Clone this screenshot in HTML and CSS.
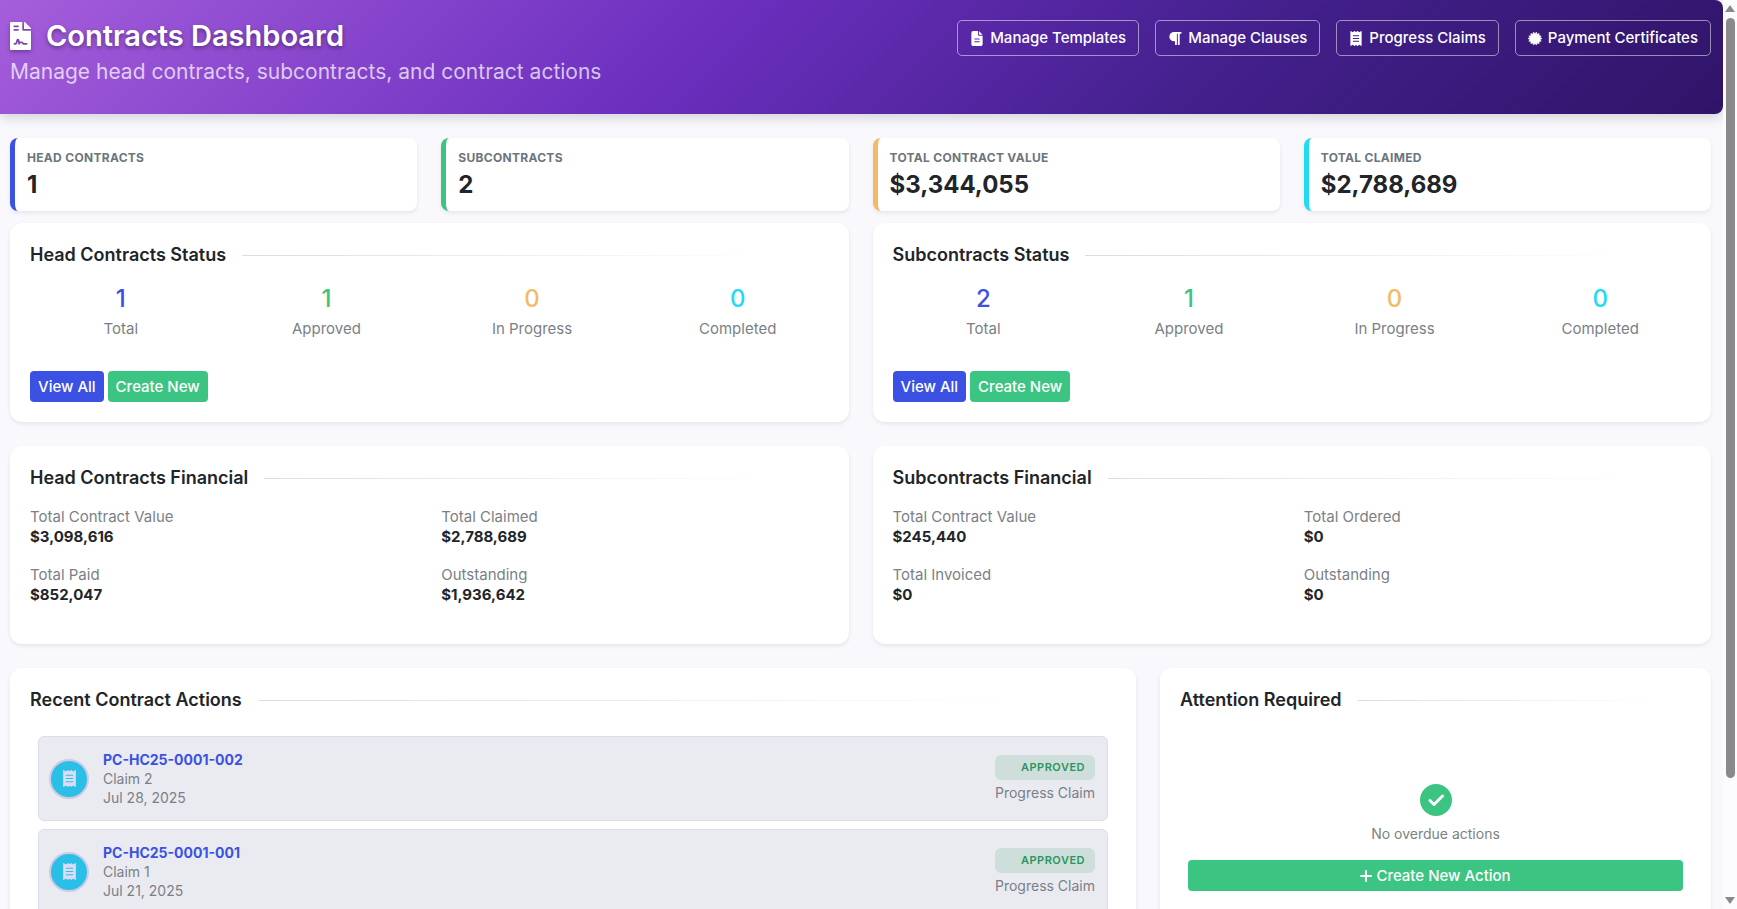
FILE: index.html
```html
<!DOCTYPE html>
<html lang="en">
<head>
    <meta charset="UTF-8">
    <meta name="viewport" content="width=device-width, initial-scale=1.0">
    <title>Contracts Dashboard</title>
    <link rel="stylesheet" href="styles.css">
</head>
<body>
    <!-- icon sprite -->
    <svg class="sprite" aria-hidden="true">
        <symbol id="icon-contract" viewBox="0 0 384 512">
            <path d="M224 136V0H24C10.700 0 0 10.700 0 24v464c0 13.300 10.700 24 24 24h336c13.300 0 24-10.700 24-24V160H248c-13.200 0-24-10.800-24-24zM64 72c0-4.420 3.580-8 8-8h80c4.420 0 8 3.580 8 8v16c0 4.420-3.580 8-8 8H72c-4.420 0-8-3.580-8-8V72zm0 64c0-4.420 3.580-8 8-8h80c4.420 0 8 3.580 8 8v16c0 4.420-3.580 8-8 8H72c-4.420 0-8-3.580-8-8v-16zm192.810 248H304c8.840 0 16 7.160 16 16s-7.160 16-16 16h-47.190c-16.450 0-31.800-9.140-39.140-23.880-4.030-8.080-10.460-9.280-14.670-9.280s-10.650 1.200-14.800 9.800l-7.670 15.360A16 16 0 0 1 167 416c-.38 0-.77 0-1.140-.05-6.400-.45-11.980-4.750-14.020-10.840L144 354.590l-10.610 31.880c-5.890 17.660-22.380 29.530-41 29.530H80c-8.840 0-16-7.160-16-16s7.160-16 16-16h12.390c4.830 0 9.110-3.080 10.640-7.660l18.190-54.640c3.300-9.810 12.440-16.410 22.780-16.410s19.480 6.590 22.770 16.410l13.880 41.640c19.770-16.190 54.050-9.700 66 14.160 2.020 4.060 5.960 6.500 10.160 6.500zM377 105L279.100 7c-4.500-4.500-10.600-7-17-7H256v128h128v-6.100c0-6.300-2.500-12.400-7-16.900z"/>
        </symbol>
        <symbol id="icon-file" viewBox="0 0 384 512">
            <path fill-rule="evenodd" d="M64 0C29 0 0 29 0 64v384c0 35 29 64 64 64h256c35 0 64-29 64-64V160H256c-18 0-32-14-32-32V0H64zM256 0v128h128L256 0zM112 256h160c9 0 16 7 16 16s-7 16-16 16H112c-9 0-16-7-16-16s7-16 16-16zm0 96h160c9 0 16 7 16 16s-7 16-16 16H112c-9 0-16-7-16-16s7-16 16-16z"/>
        </symbol>
        <symbol id="icon-paragraph" viewBox="0 0 448 512">
            <path d="M448 48v32a16 16 0 0 1-16 16h-48v368a16 16 0 0 1-16 16h-32a16 16 0 0 1-16-16V96h-32v368a16 16 0 0 1-16 16h-32a16 16 0 0 1-16-16V352h-32a160 160 0 0 1 0-320h240a16 16 0 0 1 16 16z"/>
        </symbol>
        <symbol id="icon-receipt" viewBox="0 0 384 512">
            <path fill-rule="evenodd" d="M0 24C0 5 14-5 28 5l52 38 56-39c5-4 11-4 16 0l40 37 40-37c5-4 11-4 16 0l56 39 52-38c14-10 28 0 28 19v464c0 19-14 29-28 19l-52-38-56 39c-5 4-11 4-16 0l-40-37-40 37c-5 4-11 4-16 0l-56-39-52 38C14 517 0 507 0 488V24zM96 144a16 16 0 0 0 0 32h192a16 16 0 0 0 0-32H96zM80 256c0 9 7 16 16 16h192a16 16 0 0 0 0-32H96c-9 0-16 7-16 16zm16 80a16 16 0 0 0 0 32h192a16 16 0 0 0 0-32H96z"/>
        </symbol>
        <symbol id="icon-certificate" viewBox="0 0 24 24">
            <path stroke="currentColor" stroke-width="1" stroke-linejoin="round" d="M12 4l2.500-3 1 3.700L19.100 3.500l-.3 3.800 3.700.2-1.800 3.200L24 12l-3.300 1.500 1.800 3.200-3.700.3.300 3.700-3.600-1-1 3.600L12 20.500 9.500 23.300l-1-3.600-3.600 1 .3-3.700-3.700-.3 1.800-3.200L0 12l3.300-1.300L1.500 7.500l3.700-.2-.3-3.800 3.600 1.200 1-3.700z"/>
        </symbol>
        <symbol id="icon-check" viewBox="0 0 32 32">
            <circle cx="16" cy="16" r="16"/>
            <path fill="none" stroke="#fff" stroke-width="3" stroke-linecap="round" stroke-linejoin="round" d="M10 16.500l4 4 8.500-8.500"/>
        </symbol>
        <symbol id="icon-plus" viewBox="0 0 12 12">
            <path fill="none" stroke="currentColor" stroke-width="2" stroke-linecap="round" d="M6 1v10M1 6h10"/>
        </symbol>
    </svg>

    <div class="page">
        <header class="page-header">
            <div>
                <h1>
                    <svg class="title-icon"><use href="#icon-contract"/></svg>
                    Contracts Dashboard
                </h1>
                <p class="subtitle">Manage head contracts, subcontracts, and contract actions</p>
            </div>
            <nav class="header-actions">
                <a href="#templates" class="btn-outline"><svg><use href="#icon-file"/></svg>Manage Templates</a>
                <a href="#clauses" class="btn-outline"><svg><use href="#icon-paragraph"/></svg>Manage Clauses</a>
                <a href="#claims" class="btn-outline"><svg><use href="#icon-receipt"/></svg>Progress Claims</a>
                <a href="#certificates" class="btn-outline"><svg><use href="#icon-certificate"/></svg>Payment Certificates</a>
            </nav>
        </header>

        <main>
            <section class="stats">
                <div class="stat primary">
                    <div class="stat-label">Head Contracts</div>
                    <div class="stat-value">1</div>
                </div>
                <div class="stat success">
                    <div class="stat-label">Subcontracts</div>
                    <div class="stat-value">2</div>
                </div>
                <div class="stat warning">
                    <div class="stat-label">Total Contract Value</div>
                    <div class="stat-value">$3,344,055</div>
                </div>
                <div class="stat info">
                    <div class="stat-label">Total Claimed</div>
                    <div class="stat-value">$2,788,689</div>
                </div>
            </section>

            <div class="cards">
                <section class="card half">
                    <h2>Head Contracts Status</h2>
                    <div class="counts">
                        <div class="primary"><strong>1</strong><span>Total</span></div>
                        <div class="success"><strong>1</strong><span>Approved</span></div>
                        <div class="warning"><strong>0</strong><span>In Progress</span></div>
                        <div class="info"><strong>0</strong><span>Completed</span></div>
                    </div>
                    <div class="card-actions">
                        <a href="#head-contracts" class="btn btn-primary">View All</a>
                        <a href="#head-contracts-new" class="btn btn-success">Create New</a>
                    </div>
                </section>

                <section class="card half">
                    <h2>Subcontracts Status</h2>
                    <div class="counts">
                        <div class="primary"><strong>2</strong><span>Total</span></div>
                        <div class="success"><strong>1</strong><span>Approved</span></div>
                        <div class="warning"><strong>0</strong><span>In Progress</span></div>
                        <div class="info"><strong>0</strong><span>Completed</span></div>
                    </div>
                    <div class="card-actions">
                        <a href="#subcontracts" class="btn btn-primary">View All</a>
                        <a href="#subcontracts-new" class="btn btn-success">Create New</a>
                    </div>
                </section>

                <section class="card half">
                    <h2>Head Contracts Financial</h2>
                    <dl class="figures">
                        <div><dt>Total Contract Value</dt><dd>$3,098,616</dd></div>
                        <div><dt>Total Claimed</dt><dd>$2,788,689</dd></div>
                        <div><dt>Total Paid</dt><dd>$852,047</dd></div>
                        <div><dt>Outstanding</dt><dd>$1,936,642</dd></div>
                    </dl>
                </section>

                <section class="card half">
                    <h2>Subcontracts Financial</h2>
                    <dl class="figures">
                        <div><dt>Total Contract Value</dt><dd>$245,440</dd></div>
                        <div><dt>Total Ordered</dt><dd>$0</dd></div>
                        <div><dt>Total Invoiced</dt><dd>$0</dd></div>
                        <div><dt>Outstanding</dt><dd>$0</dd></div>
                    </dl>
                </section>

                <section class="card wide">
                    <h2>Recent Contract Actions</h2>
                    <ul class="action-list">
                        <li class="action">
                            <span class="action-icon"><svg><use href="#icon-receipt"/></svg></span>
                            <div class="action-body">
                                <a href="#pc-002">PC-HC25-0001-002</a>
                                <span>Claim 2</span>
                                <span>Jul 28, 2025</span>
                            </div>
                            <div class="action-status">
                                <span class="badge">Approved</span>
                                <span>Progress Claim</span>
                            </div>
                        </li>
                        <li class="action">
                            <span class="action-icon"><svg><use href="#icon-receipt"/></svg></span>
                            <div class="action-body">
                                <a href="#pc-001">PC-HC25-0001-001</a>
                                <span>Claim 1</span>
                                <span>Jul 21, 2025</span>
                            </div>
                            <div class="action-status">
                                <span class="badge">Approved</span>
                                <span>Progress Claim</span>
                            </div>
                        </li>
                    </ul>
                </section>

                <section class="card narrow">
                    <h2>Attention Required</h2>
                    <div class="attention">
                        <svg class="check"><use href="#icon-check"/></svg>
                        <p>No overdue actions</p>
                        <button type="button" class="btn btn-success"><svg><use href="#icon-plus"/></svg>Create New Action</button>
                    </div>
                </section>
            </div>
        </main>
    </div>

    <div class="scrollbar" aria-hidden="true">
        <span class="arrow up"></span>
        <span class="track"><span class="thumb"></span></span>
        <span class="arrow down"></span>
    </div>
</body>
</html>
```

FILE: styles.css
```css
:root {
    --primary: #3b51e3;
    --success: #3cc483;
    --warning: #f3bb67;
    --info: #22daf2;
    --background: #f8f8fd;
    --text: #212529;
    --muted: #7b7f86;
}
* {
    box-sizing: border-box;
}
body {
    margin: 0;
    height: 100vh;
    display: flex;
    overflow: hidden;
    background: var(--background);
    color: var(--text);
    font-family: Inter, sans-serif;
    font-size: 14px;
    line-height: 20px;
}
h1, h2, p, dl, dd, ul {
    margin: 0;
    padding: 0;
}
a {
    text-decoration: none;
}
svg {
    fill: currentColor;
}
.sprite {
    display: none;
}
.page {
    flex: 1;
    min-width: 0;
    overflow: hidden;
}

/* header */
.page-header {
    display: flex;
    justify-content: space-between;
    align-items: flex-start;
    padding: 20px 12px 26px 10px;
    border-radius: 0 8px 8px 0;
    background: linear-gradient(135deg, #a55edb 0%, #6c2fbf 40%, #43208c 70%, #301468 100%);
    box-shadow: 0 4px 12px rgba(0, 0, 0, 0.15);
    color: #fff;
}
h1 {
    display: flex;
    align-items: center;
    gap: 15px;
    font-size: 29px;
    font-weight: 600;
    line-height: 32px;
    text-shadow: 0 2px 4px rgba(0, 0, 0, 0.4);
}
.title-icon {
    width: 21px;
    height: 28px;
    filter: drop-shadow(0 2px 2px rgba(0, 0, 0, 0.3));
}
.subtitle {
    margin-top: 4px;
    font-size: 21px;
    line-height: 32px;
    color: rgba(255, 255, 255, 0.72);
}
.header-actions {
    display: flex;
    gap: 16px;
}
.btn-outline {
    display: flex;
    align-items: center;
    gap: 6px;
    height: 36px;
    padding: 0 12px;
    border: 1px solid rgba(255, 255, 255, 0.5);
    border-radius: 5px;
    color: #fff;
    font-size: 15px;
    font-weight: 500;
    white-space: nowrap;
}
.btn-outline svg {
    width: 14px;
    height: 15px;
}

main {
    padding: 24px 12px 24px 10px;
}

/* stat tiles */
.stats {
    display: grid;
    grid-template-columns: repeat(4, 1fr);
    gap: 24px;
    margin-bottom: 12px;
}
.stat {
    padding: 12px;
    border-left: 5px solid currentColor;
    border-radius: 8px;
    background: #fff;
    box-shadow: 0 2px 4px rgba(0, 0, 0, 0.08);
}
.primary {
    color: var(--primary);
}
.success {
    color: var(--success);
}
.warning {
    color: var(--warning);
}
.info {
    color: var(--info);
}
.stat-label {
    color: #6c757d;
    font-size: 12px;
    font-weight: 700;
    line-height: 16px;
    letter-spacing: 0.3px;
    text-transform: uppercase;
}
.stat-value {
    margin-top: 4px;
    color: var(--text);
    font-size: 24px;
    font-weight: 700;
    line-height: 29px;
}

/* cards */
.cards {
    display: grid;
    grid-template-columns: repeat(12, 1fr);
    gap: 24px;
}
.card {
    padding: 20px;
    border-radius: 12px;
    background: #fff;
    box-shadow: 0 2px 4px rgba(0, 0, 0, 0.08);
}
.half {
    grid-column: span 6;
}
.wide {
    grid-column: span 8;
}
.narrow {
    grid-column: span 4;
}
h2 {
    display: flex;
    align-items: center;
    gap: 16px;
    font-size: 18px;
    font-weight: 600;
    line-height: 24px;
}
h2::after {
    content: "";
    flex: 1;
    height: 1px;
    background: linear-gradient(90deg, #dcdce4, transparent 90%);
}
.counts {
    display: grid;
    grid-template-columns: repeat(4, 1fr);
    gap: 24px;
    margin-top: 16px;
    text-align: center;
}
.counts strong {
    display: block;
    font-size: 24px;
    font-weight: 500;
    line-height: 32px;
}
.counts span {
    display: block;
    margin-top: 4px;
    color: var(--muted);
    font-size: 15px;
}
.card-actions {
    display: flex;
    gap: 4px;
    margin-top: 32px;
}
.btn {
    display: inline-flex;
    align-items: center;
    justify-content: center;
    gap: 4px;
    height: 31px;
    padding: 0 8px;
    border: 0;
    border-radius: 4px;
    color: #fff;
    font: inherit;
    font-size: 15px;
    font-weight: 500;
}
.btn-primary {
    background: var(--primary);
}
.btn-success {
    background: var(--success);
}
.btn svg {
    width: 12px;
    height: 12px;
}
.figures {
    display: grid;
    grid-template-columns: 1fr 1fr;
    gap: 18px 24px;
    padding: 17px 0 19px;
}
.figures dt {
    color: var(--muted);
    font-size: 15px;
}
.figures dd {
    font-size: 15px;
    font-weight: 700;
}

/* recent actions */
.action-list {
    display: grid;
    gap: 8px;
    margin-top: 16px;
    padding: 8px;
    list-style: none;
}
.action {
    display: flex;
    align-items: center;
    gap: 14px;
    padding: 13px 12px 13px 10px;
    border: 1px solid #dcdde6;
    border-radius: 6px;
    background: #eaebf1;
    color: var(--muted);
    line-height: 19px;
}
.action-icon {
    display: grid;
    place-items: center;
    width: 40px;
    height: 40px;
    border: 2px solid #cfcbe6;
    border-radius: 50%;
    background: #2abfe6;
    color: #dcdcf4;
}
.action-icon svg {
    width: 13px;
    height: 17px;
}
.action-body {
    flex: 1;
}
.action-body a {
    color: var(--primary);
    font-weight: 700;
}
.action-body a, .action-body span {
    display: block;
}
.action-status {
    display: flex;
    flex-direction: column;
    gap: 3px;
}
.badge {
    padding: 0 10px;
    border-radius: 6px;
    background: #cedfdb;
    color: #2a9560;
    font-size: 11px;
    font-weight: 600;
    line-height: 25px;
    letter-spacing: 0.5px;
    text-align: right;
    text-transform: uppercase;
}

/* attention */
.attention {
    display: flex;
    flex-direction: column;
    align-items: center;
    padding: 72px 8px 8px;
    color: var(--muted);
}
.check {
    width: 32px;
    height: 32px;
    color: var(--success);
}
.attention p {
    margin: 8px 0 16px;
}
.attention .btn {
    width: 100%;
}

/* page scrollbar */
.scrollbar {
    display: flex;
    flex-direction: column;
    align-items: center;
    width: 14px;
    padding: 5px 0;
    background: #fcfcff;
}
.arrow {
    border: 5px solid transparent;
}
.up {
    border-top: 0;
    border-bottom: 7px solid #8b898b;
}
.down {
    border-top: 7px solid #8b898b;
    border-bottom: 0;
}
.track {
    flex: 1;
    padding: 6px 0;
}
.thumb {
    display: block;
    width: 9px;
    height: 87%;
    border-radius: 5px;
    background: #8b898b;
}
```
